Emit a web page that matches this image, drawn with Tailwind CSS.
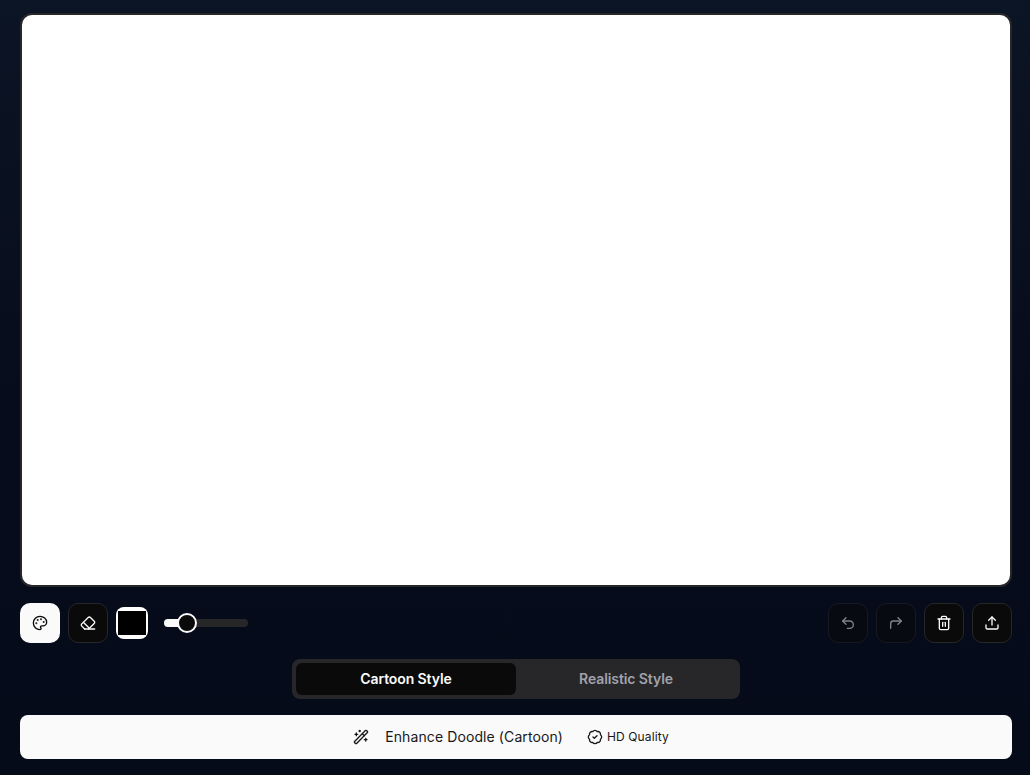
<!DOCTYPE html>
<html lang="en">
<head>
  <meta charset="UTF-8" />
  <title>Doodle Enhancer</title>
  <script src="https://cdn.jsdelivr.net/npm/@tailwindcss/browser@4"></script>
</head>
<body class="h-[775px] overflow-hidden bg-gradient-to-b from-[#0c1525] via-[#070c1c] to-[#060b1a] font-['Inter',sans-serif]">
  <main class="ml-5 w-[992px] pt-[13px] flex flex-col">
    <div class="h-[574px] rounded-xl border-2 border-[#27272a] bg-white"></div>

    <div class="mt-4 flex items-center justify-between">
      <div class="flex items-center gap-2">
        <button class="w-10 h-10 rounded-[10px] bg-[#fafafa] text-[#0a0a0a] flex items-center justify-center">
          <svg class="w-4 h-4" viewBox="0 0 24 24" fill="none" stroke="currentColor" stroke-width="2" stroke-linecap="round" stroke-linejoin="round"><circle cx="13.5" cy="6.5" r=".5" fill="currentColor"/><circle cx="17.5" cy="10.5" r=".5" fill="currentColor"/><circle cx="8.5" cy="7.5" r=".5" fill="currentColor"/><circle cx="6.5" cy="12.5" r=".5" fill="currentColor"/><path d="M12 2C6.5 2 2 6.5 2 12s4.5 10 10 10c.926 0 1.648-.746 1.648-1.688 0-.437-.18-.835-.437-1.125-.29-.289-.438-.652-.438-1.125a1.64 1.64 0 0 1 1.668-1.668h1.996c3.051 0 5.555-2.503 5.555-5.554C21.965 6.012 17.461 2 12 2z"/></svg>
        </button>
        <button class="w-10 h-10 rounded-[10px] bg-[#0a0a0a] border border-[#27272a] text-[#fafafa] flex items-center justify-center">
          <svg class="w-4 h-4" viewBox="0 0 24 24" fill="none" stroke="currentColor" stroke-width="2" stroke-linecap="round" stroke-linejoin="round"><path d="m7 21-4.3-4.3c-1-1-1-2.5 0-3.4l9.6-9.6c1-1 2.5-1 3.4 0l5.6 5.6c1 1 1 2.5 0 3.4L13 21"/><path d="M22 21H7"/><path d="m5 11 9 9"/></svg>
        </button>
        <div class="w-8 h-8 rounded-lg bg-white px-[2px] py-1">
          <div class="h-full bg-black"></div>
        </div>
        <div class="ml-2 relative w-[84px] h-2 rounded-full bg-[#27272a]">
          <div class="h-full w-[16px] rounded-l-full bg-[#fafafa]"></div>
          <div class="absolute left-[13px] top-[-6px] w-[20px] h-[20px] rounded-full bg-[#0a0a0a] border-2 border-[#fafafa]"></div>
        </div>
      </div>

      <div class="flex items-center gap-2">
        <button disabled class="w-10 h-10 rounded-[10px] bg-[#0a0a0a] border border-[#27272a] text-[#fafafa] flex items-center justify-center opacity-50">
          <svg class="w-4 h-4" viewBox="0 0 24 24" fill="none" stroke="currentColor" stroke-width="2" stroke-linecap="round" stroke-linejoin="round"><path d="M9 14 4 9l5-5"/><path d="M4 9h10.5a5.5 5.5 0 0 1 5.5 5.5a5.5 5.5 0 0 1-5.5 5.5H11"/></svg>
        </button>
        <button disabled class="w-10 h-10 rounded-[10px] bg-[#0a0a0a] border border-[#27272a] text-[#fafafa] flex items-center justify-center opacity-50">
          <svg class="w-4 h-4" viewBox="0 0 24 24" fill="none" stroke="currentColor" stroke-width="2" stroke-linecap="round" stroke-linejoin="round"><polyline points="15 14 20 9 15 4"/><path d="M4 20v-7a4 4 0 0 1 4-4h12"/></svg>
        </button>
        <button class="w-10 h-10 rounded-[10px] bg-[#0a0a0a] border border-[#27272a] text-[#fafafa] flex items-center justify-center">
          <svg class="w-4 h-4" viewBox="0 0 24 24" fill="none" stroke="currentColor" stroke-width="2" stroke-linecap="round" stroke-linejoin="round"><path d="M3 6h18"/><path d="M19 6v14c0 1-1 2-2 2H7c-1 0-2-1-2-2V6"/><path d="M8 6V4c0-1 1-2 2-2h4c1 0 2 1 2 2v2"/><line x1="10" x2="10" y1="11" y2="17"/><line x1="14" x2="14" y1="11" y2="17"/></svg>
        </button>
        <button class="w-10 h-10 rounded-[10px] bg-[#0a0a0a] border border-[#27272a] text-[#fafafa] flex items-center justify-center">
          <svg class="w-4 h-4" viewBox="0 0 24 24" fill="none" stroke="currentColor" stroke-width="2" stroke-linecap="round" stroke-linejoin="round"><path d="M21 15v4a2 2 0 0 1-2 2H5a2 2 0 0 1-2-2v-4"/><polyline points="17 8 12 3 7 8"/><line x1="12" x2="12" y1="3" y2="15"/></svg>
        </button>
      </div>
    </div>

    <div class="mt-4 mx-auto w-[448px] h-10 rounded-lg bg-[#27272a] p-1 grid grid-cols-2 text-sm tracking-[-0.1px]">
      <button class="rounded-md bg-[#0a0a0a] text-[#fafafa] font-semibold">Cartoon Style</button>
      <button class="rounded-md text-[#a1a1aa] font-semibold">Realistic Style</button>
    </div>

    <button class="mt-4 h-11 pr-[10px] rounded-lg bg-[#fafafa] text-[#18181b] flex items-center justify-center">
      <svg class="w-4 h-4 mr-4" viewBox="0 0 24 24" fill="none" stroke="currentColor" stroke-width="2" stroke-linecap="round" stroke-linejoin="round"><path d="m21.64 3.64-1.28-1.28a1.21 1.21 0 0 0-1.72 0L2.36 18.64a1.21 1.21 0 0 0 0 1.72l1.28 1.28a1.2 1.2 0 0 0 1.72 0L21.64 5.36a1.2 1.2 0 0 0 0-1.72"/><path d="m14 7 3 3"/><path d="M5 6v4"/><path d="M19 14v4"/><path d="M10 2v2"/><path d="M7 8H3"/><path d="M21 16h-4"/><path d="M11 3H9"/></svg>
      <span class="text-sm font-normal tracking-[0.1px]">Enhance Doodle (Cartoon)</span>
      <span class="ml-6 flex items-center gap-1 text-xs font-normal tracking-[0.1px]">
        <svg class="w-4 h-4" viewBox="0 0 24 24" fill="none" stroke="currentColor" stroke-width="2" stroke-linecap="round" stroke-linejoin="round"><path d="M3.85 8.62a4 4 0 0 1 4.78-4.77 4 4 0 0 1 6.74 0 4 4 0 0 1 4.78 4.78 4 4 0 0 1 0 6.74 4 4 0 0 1-4.77 4.78 4 4 0 0 1-6.75 0 4 4 0 0 1-4.78-4.77 4 4 0 0 1 0-6.76Z"/><path d="m9 12 2 2 4-4"/></svg>
        HD Quality
      </span>
    </button>
  </main>
</body>
</html>
